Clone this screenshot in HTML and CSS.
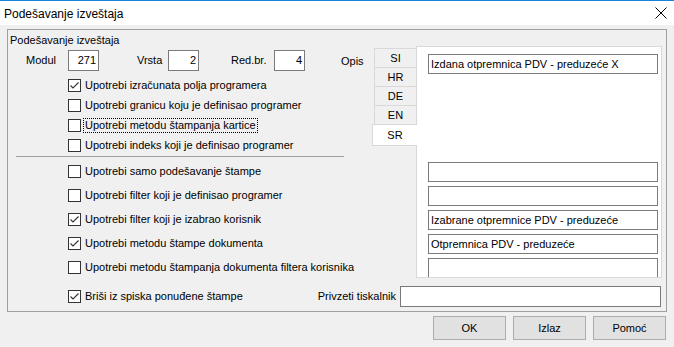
FILE: index.html
```html
<!DOCTYPE html>
<html lang="sr">
<head>
    <meta charset="UTF-8">
    <title>Podešavanje izveštaja</title>
    <link rel="stylesheet" href="styles.css">
</head>
<body>
    <div class="window">
        <div class="titlebar">
            <span class="title">Podešavanje izveštaja</span>
            <svg class="close" width="12" height="12" viewBox="0 0 12 12">
                <path d="M0.5 0.5 L11.5 11.5 M11.5 0.5 L0.5 11.5" stroke="#000" stroke-width="1" fill="none"/>
            </svg>
        </div>

        <div class="group">
            <div class="group-title">Podešavanje izveštaja</div>
            <div class="group-main">
                <div class="left">
                    <div class="fields">
                        <span class="lbl lbl-modul">Modul</span>
                        <div class="num">271</div>
                        <span class="lbl lbl-vrsta">Vrsta</span>
                        <div class="num">2</div>
                        <span class="lbl lbl-red">Red.br.</span>
                        <div class="num">4</div>
                    </div>

                    <div class="checks checks-top">
                        <div class="check on"><span class="box"><svg width="11" height="11" viewBox="0 0 11 11"><path d="M1.5 5.5 L4 8 L9.5 2.5" stroke="#333" stroke-width="1.1" fill="none"/></svg></span><span class="txt">Upotrebi izračunata polja programera</span></div>
                        <div class="check"><span class="box"></span><span class="txt">Upotrebi granicu koju je definisao programer</span></div>
                        <div class="check"><span class="box"></span><span class="txt focus">Upotrebi metodu štampanja kartice</span></div>
                        <div class="check"><span class="box"></span><span class="txt">Upotrebi indeks koji je definisao programer</span></div>
                    </div>

                    <div class="sep"></div>

                    <div class="checks checks-bottom">
                        <div class="check"><span class="box"></span><span class="txt">Upotrebi samo podešavanje štampe</span></div>
                        <div class="check"><span class="box"></span><span class="txt">Upotrebi filter koji je definisao programer</span></div>
                        <div class="check on"><span class="box"><svg width="11" height="11" viewBox="0 0 11 11"><path d="M1.5 5.5 L4 8 L9.5 2.5" stroke="#333" stroke-width="1.1" fill="none"/></svg></span><span class="txt">Upotrebi filter koji je izabrao korisnik</span></div>
                        <div class="check on"><span class="box"><svg width="11" height="11" viewBox="0 0 11 11"><path d="M1.5 5.5 L4 8 L9.5 2.5" stroke="#333" stroke-width="1.1" fill="none"/></svg></span><span class="txt">Upotrebi metodu štampe dokumenta</span></div>
                        <div class="check"><span class="box"></span><span class="txt">Upotrebi metodu štampanja dokumenta filtera korisnika</span></div>
                    </div>
                </div>

                <div class="opis">Opis</div>

                <div class="tabs">
                    <div class="tab">SI</div>
                    <div class="tab">HR</div>
                    <div class="tab">DE</div>
                    <div class="tab">EN</div>
                    <div class="tab selected">SR</div>
                </div>

                <div class="panel">
                    <div class="field first">Izdana otpremnica PDV - preduzeće X</div>
                    <div class="field gap"></div>
                    <div class="field"></div>
                    <div class="field">Izabrane otpremnice PDV - preduzeće</div>
                    <div class="field">Otpremnica PDV - preduzeće</div>
                    <div class="field"></div>
                </div>
            </div>

            <div class="group-foot">
                <div class="check on foot-check"><span class="box"><svg width="11" height="11" viewBox="0 0 11 11"><path d="M1.5 5.5 L4 8 L9.5 2.5" stroke="#333" stroke-width="1.1" fill="none"/></svg></span><span class="txt">Briši iz spiska ponuđene štampe</span></div>
                <span class="lbl lbl-printer">Privzeti tiskalnik</span>
                <div class="printer"></div>
            </div>
        </div>

        <div class="buttons">
            <button>OK</button>
            <button>Izlaz</button>
            <button>Pomoć</button>
        </div>
    </div>
</body>
</html>
```

FILE: styles.css
```css
html, body {
    margin: 0;
    padding: 0;
}
body {
    width: 674px;
    height: 347px;
    overflow: hidden;
    background-color: #f0f0f0;
    font-family: 'Liberation Sans', Arial, sans-serif;
    font-size: 11px;
    color: #000;
}
.window {
    width: 674px;
    height: 347px;
}
.titlebar {
    height: 24px;
    background: #ffffff;
    border-top: 1px solid #1883d7;
    display: flex;
    align-items: center;
    justify-content: space-between;
    padding: 0 7px 0 4px;
}
.title {
    font-size: 12px;
    padding-top: 2px;
}
.close {
    display: block;
}
.group {
    margin: 4px 0 0 7px;
    width: 658px;
    border: 1px solid #a0a0a0;
}
.group-title {
    height: 12px;
    line-height: 12px;
    padding: 4px 0 0 2px;
}
.group-main {
    display: flex;
    align-items: flex-start;
    height: 232px;
}
.left {
    width: 333px;
    padding-top: 4px;
}
.fields {
    display: flex;
    align-items: center;
    height: 21px;
    padding-left: 18px;
}
.lbl {
    line-height: 13px;
}
.lbl-modul { width: 42px; }
.lbl-vrsta { width: 31px; margin-left: 38px; }
.lbl-red { width: 43px; margin-left: 32px; }
.num {
    box-sizing: border-box;
    width: 31px;
    height: 21px;
    border: 1px solid #7a7a7a;
    background: #fff;
    text-align: right;
    padding-right: 2px;
    line-height: 19px;
}
.checks-top {
    margin-top: 4px;
}
.checks-top .check {
    height: 20px;
}
.checks-bottom {
    margin-top: 2px;
}
.checks-bottom .check {
    height: 24px;
}
.check {
    display: flex;
    align-items: center;
    padding-left: 60px;
}
.box {
    box-sizing: border-box;
    width: 13px;
    height: 13px;
    border: 1px solid #333;
    background: #fff;
    display: flex;
    align-items: center;
    justify-content: center;
    flex-shrink: 0;
}
.box svg {
    display: block;
}
.txt {
    margin-left: 2px;
    padding: 0 1px;
    line-height: 13px;
    white-space: nowrap;
    border: 1px solid transparent;
}
.txt.focus {
    border: 1px dotted #000;
}
.sep {
    margin: 1px 0 0 8px;
    width: 328px;
    height: 1px;
    background: #a0a0a0;
}
.opis {
    width: 31px;
    padding-top: 9px;
    line-height: 13px;
}
.tabs {
    width: 44px;
    padding-top: 2px;
    position: relative;
    z-index: 1;
}
.tab {
    box-sizing: border-box;
    margin-left: 2px;
    height: 20px;
    margin-bottom: -1px;
    border: 1px solid #d9d9d9;
    border-right: none;
    background: #f0f0f0;
    text-align: center;
    line-height: 18px;
}
.tab.selected {
    margin-left: 0;
    margin-right: -1px;
    margin-top: 0;
    height: 22px;
    line-height: 20px;
    background: #fff;
}
.panel {
    box-sizing: border-box;
    width: 246px;
    height: 232px;
    border: 1px solid #d9d9d9;
    background: #fff;
    overflow: hidden;
    padding: 7px 0 0 11px;
}
.field {
    box-sizing: border-box;
    width: 230px;
    height: 20px;
    border: 1px solid #7a7a7a;
    margin-bottom: 4px;
    padding-left: 2px;
    line-height: 18px;
    white-space: nowrap;
    overflow: hidden;
}
.field.gap {
    margin-top: 88px;
}
.group-foot {
    display: flex;
    align-items: center;
    height: 21px;
    margin-top: 8px;
    padding-bottom: 4px;
}
.foot-check {
    flex: 1;
}
.lbl-printer {
    margin-right: 4px;
}
.printer {
    box-sizing: border-box;
    width: 261px;
    height: 21px;
    margin-right: 5px;
    border: 1px solid #7a7a7a;
    background: #fff;
}
.buttons {
    display: flex;
    justify-content: flex-end;
    gap: 7px;
    margin-top: 4px;
    padding-right: 8px;
}
button {
    box-sizing: border-box;
    width: 73px;
    height: 24px;
    background-color: #e1e1e1;
    border: 1px solid #adadad;
    font-family: 'Liberation Sans', Arial, sans-serif;
    font-size: 11px;
    color: #000;
    padding: 0;
}
```
